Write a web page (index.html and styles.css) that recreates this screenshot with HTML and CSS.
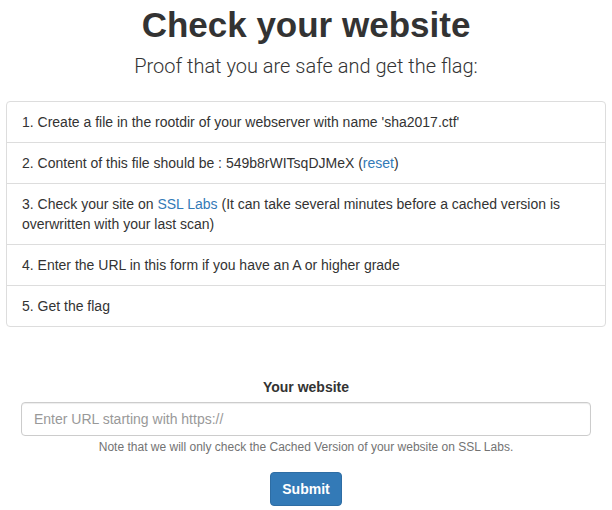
FILE: index.html
```html
<!DOCTYPE html>
<html lang="en">
<head>
<meta charset="utf-8">
<title>Check your website</title>
<link rel="stylesheet" href="styles.css">
</head>
<body>
<div class="container">
  <h1 class="title">Check your website</h1>
  <p class="lead">Proof that you are safe and get the flag:</p>
  <ul class="steps">
    <li class="step">1. Create a file in the rootdir of your webserver with name 'sha2017.ctf'</li>
    <li class="step">2. Content of this file should be : 549b8rWITsqDJMeX (<a href="#" class="link">reset</a>)</li>
    <li class="step">3. Check your site on <a href="#" class="link">SSL Labs</a> (It can take several minutes before a cached version is overwritten with your last scan)</li>
    <li class="step">4. Enter the URL in this form if you have an A or higher grade</li>
    <li class="step">5. Get the flag</li>
  </ul>
  <form class="form">
    <label class="label" for="url">Your website</label>
    <input class="input" id="url" type="text" placeholder="Enter URL starting with https://">
    <p class="help">Note that we will only check the Cached Version of your website on SSL Labs.</p>
    <button class="btn" type="button">Submit</button>
  </form>
</div>
</body>
</html>
```
FILE: styles.css
```css
html, body {
  margin: 0;
  padding: 0;
  background: #fff;
}
body {
  font-family: "Liberation Sans", Helvetica, Arial, sans-serif;
  font-size: 14px;
  line-height: 20px;
  color: #333;
}
.container {
  padding: 0 6px;
}
.title {
  margin: 5px 0 0;
  font-size: 35px;
  line-height: 39.6px;
  font-weight: 700;
  text-align: center;
  color: #333;
}
.lead {
  margin: 7px 0 20px;
  font-family: Roboto, "Liberation Sans", sans-serif;
  font-size: 20px;
  line-height: 29.4px;
  font-weight: 300;
  text-align: center;
}
.steps {
  list-style: none;
  margin: 0;
  padding: 0;
  border: 1px solid #ddd;
  border-radius: 4px;
}
.step {
  padding: 10px 15px;
}
.step + .step {
  border-top: 1px solid #ddd;
}
.link {
  color: #337ab7;
  text-decoration: none;
}
.form {
  display: flex;
  flex-direction: column;
  align-items: center;
  padding: 50px 15px 0;
}
.label {
  font-weight: 700;
  margin-bottom: 5px;
}
.input {
  box-sizing: border-box;
  width: 100%;
  height: 34px;
  padding: 6px 12px;
  font-family: inherit;
  font-size: 14px;
  color: #555;
  border: 1px solid #ccc;
  border-radius: 4px;
  box-shadow: inset 0 1px 1px rgba(0,0,0,.075);
  outline: none;
}
.input::placeholder {
  color: #999;
}
.help {
  margin: 3px 0 16px;
  font-size: 12px;
  line-height: 17px;
  color: #737373;
}
.btn {
  box-sizing: border-box;
  height: 34px;
  padding: 6px 11px;
  font-family: inherit;
  font-size: 14px;
  line-height: 20px;
  font-weight: 700;
  color: #fff;
  background: #337ab7;
  border: 1px solid #2e6da4;
  border-radius: 4px;
}
```
